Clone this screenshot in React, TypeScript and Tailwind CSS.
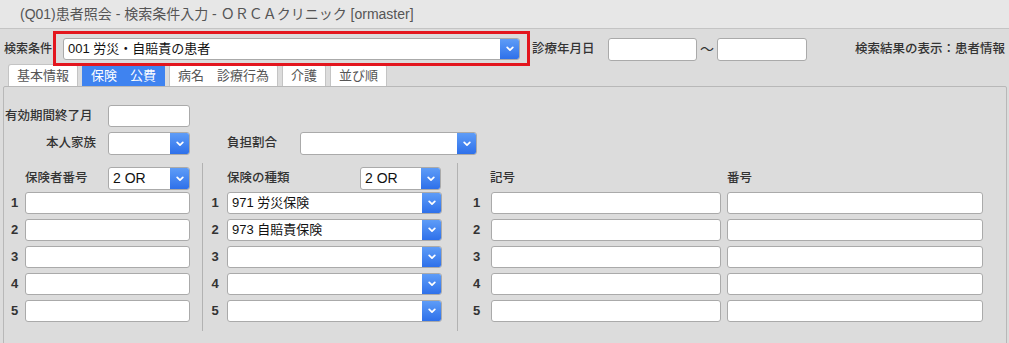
import React from 'react';

const font = "font-['Liberation_Sans','Noto_Sans_CJK_JP',sans-serif]";

function Chevron() {
  return (
    <svg width="8" height="6" viewBox="0 0 8 6" fill="none">
      <path d="M1.2 1.4 L4 4.2 L6.8 1.4" stroke="white" strokeWidth="1.7" strokeLinecap="round" strokeLinejoin="round" />
    </svg>
  );
}

function TextBox({ w, h = 'h-[22px]' }: { w: string; h?: string }) {
  return <div className={`${w} ${h} shrink-0 bg-white border border-[#aaaaaa] rounded-[3px]`} />;
}

function Select({ w, value = '', h = 'h-[23px]', text = 'text-[13px]' }: { w: string; value?: string; h?: string; text?: string }) {
  return (
    <div className={`${w} ${h} shrink-0 flex bg-white border border-[#aaaaaa] rounded-[3px] overflow-hidden`}>
      <div className={`flex-1 flex items-center pl-[4px] ${text} text-[#111] whitespace-nowrap`}>{value}</div>
      <div className="w-[19px] flex items-center justify-center bg-gradient-to-b from-[#5e9cf7] to-[#2e70ea]">
        <Chevron />
      </div>
    </div>
  );
}

const label = 'text-[12.5px] font-medium text-[#333] whitespace-nowrap';
const num = 'text-[13px] font-bold text-[#333]';

export default function App() {
  const tabs = ['基本情報', '保険　公費', '病名　診療行為', '介護', '並び順'];
  const kinds = ['971 労災保険', '973 自賠責保険', '', '', ''];

  return (
    <div className={`relative w-[1009px] h-[343px] overflow-hidden bg-[#dcdcdc] ${font}`}>
      {/* title bar */}
      <div className="h-[29px] bg-[#e7e7e7] border-b border-[#c4c4c4] flex items-center pl-[20px] text-[14px] text-[#555]">
        (Q01)患者照会 - 検索条件入力 - ＯＲＣＡクリニック [ormaster]
      </div>

      {/* search row */}
      <div className="mt-[9px] mb-[4px] h-[22px] flex items-center">
        <div className="pl-[4px] w-[63px] text-[12px] font-medium text-[#333]">検索条件</div>
        <Select w="w-[457px]" h="h-[22px]" value="001 労災・自賠責の患者" />
        <div className={`${label} ml-[12px] w-[76px]`}>診療年月日</div>
        <TextBox w="w-[89px]" h="h-[23px]" />
        <div className="w-[20px] text-center text-[14px] text-[#333]">〜</div>
        <TextBox w="w-[90px]" h="h-[23px]" />
        <div className={`${label} ml-auto pr-[4px]`}>検索結果の表示：患者情報</div>
      </div>

      {/* tabs */}
      <div className="flex gap-[4px] pl-[8px] h-[22px]">
        {tabs.map((t, i) => (
          <div
            key={t}
            className={`px-[8px] flex items-center text-[13px] rounded-t-[3px] border border-b-0 whitespace-nowrap ${
              i === 1 ? 'bg-[#3f83f0] border-[#3f83f0] text-white' : 'bg-white border-[#c4c4c4] text-[#555]'
            }`}
          >
            {t}
          </div>
        ))}
      </div>

      {/* panel */}
      <div className="ml-[3px] w-[1004px] h-[300px] border border-[#b8b8b8] rounded-t-[2px] bg-[#dcdcdc] pt-[18px]">
        <div className="flex items-center h-[22px]">
          <div className={`${label} w-[104px] pl-[1px]`}>有効期間終了月</div>
          <TextBox w="w-[82px]" />
        </div>
        <div className="flex items-center h-[23px] mt-[5px]">
          <div className={`${label} w-[104px] text-right pr-[12px]`}>本人家族</div>
          <Select w="w-[82px]" />
          <div className={`${label} ml-[37px] w-[73px]`}>負担割合</div>
          <Select w="w-[177px]" />
        </div>

        <div className="flex mt-[8px]">
          {/* 保険者番号 */}
          <div className="w-[198px] pt-[4px] pb-[9px]">
            <div className="flex items-center h-[23px]">
              <div className={`${label} w-[104px] pl-[21px]`}>保険者番号</div>
              <Select w="w-[82px]" value="2 OR" text="text-[14px]" />
            </div>
            <div className="mt-[2px] flex flex-col gap-[5px]">
              {[1, 2, 3, 4, 5].map((n) => (
                <div key={n} className="flex items-center h-[22px]">
                  <div className={`${num} w-[21px] text-center`}>{n}</div>
                  <TextBox w="w-[165px]" />
                </div>
              ))}
            </div>
          </div>
          <div className="w-[1px] bg-[#b2b2b2]" />

          {/* 保険の種類 */}
          <div className="w-[254px] pt-[4px] pb-[9px]">
            <div className="flex items-center h-[23px]">
              <div className={`${label} w-[157px] pl-[24px]`}>保険の種類</div>
              <Select w="w-[81px]" value="2 OR" text="text-[14px]" />
            </div>
            <div className="mt-[2px] flex flex-col gap-[5px]">
              {kinds.map((k, i) => (
                <div key={i} className="flex items-center h-[22px]">
                  <div className={`${num} w-[24px] text-center`}>{i + 1}</div>
                  <Select w="w-[215px]" h="h-[22px]" value={k} />
                </div>
              ))}
            </div>
          </div>
          <div className="w-[1px] bg-[#b2b2b2]" />

          {/* 記号 番号 */}
          <div className="flex-1 pt-[4px] pb-[9px]">
            <div className="flex items-center h-[23px]">
              <div className={`${label} w-[269px] pl-[32px]`}>記号</div>
              <div className={label}>番号</div>
            </div>
            <div className="mt-[2px] flex flex-col gap-[5px]">
              {[1, 2, 3, 4, 5].map((n) => (
                <div key={n} className="flex items-center h-[22px] gap-[6px]">
                  <div className={`${num} w-[27px] text-center pl-[10px]`}>{n}</div>
                  <TextBox w="w-[230px]" />
                  <TextBox w="w-[256px]" />
                </div>
              ))}
            </div>
          </div>
        </div>
      </div>

      {/* annotation frame */}
      <div className="absolute left-[53px] top-[31px] w-[477px] h-[35px] border-[3px] border-[#e3161e] pointer-events-none" />
    </div>
  );
}
